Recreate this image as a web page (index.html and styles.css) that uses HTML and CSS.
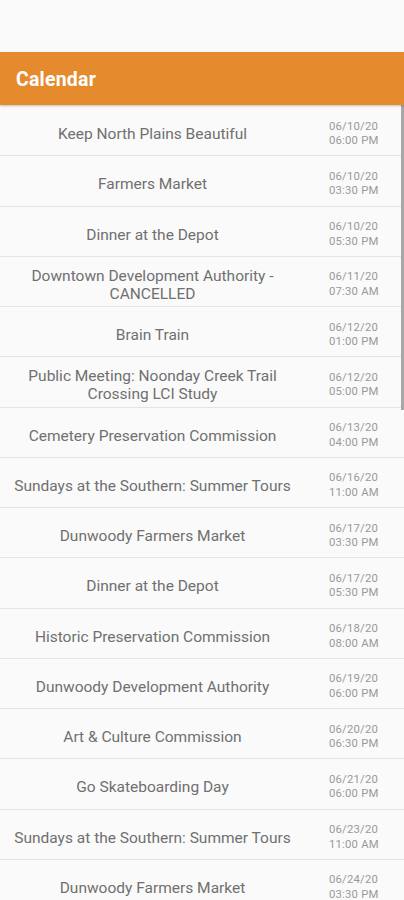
FILE: index.html
```html
<!DOCTYPE html>
<html>
<head>
<meta charset="utf-8">
<link rel="stylesheet" href="styles.css">
</head>
<body>
<div class="app">
  <div class="statusbar"></div>
  <header class="appbar"><h1 class="title">Calendar</h1></header>
  <div class="list">
    <div class="row"><div class="name">Keep North Plains Beautiful</div><div class="when">06/10/20<br>06:00 PM</div></div>
    <div class="row"><div class="name">Farmers Market</div><div class="when">06/10/20<br>03:30 PM</div></div>
    <div class="row"><div class="name">Dinner at the Depot</div><div class="when">06/10/20<br>05:30 PM</div></div>
    <div class="row"><div class="name">Downtown Development Authority - CANCELLED</div><div class="when">06/11/20<br>07:30 AM</div></div>
    <div class="row"><div class="name">Brain Train</div><div class="when">06/12/20<br>01:00 PM</div></div>
    <div class="row"><div class="name">Public Meeting: Noonday Creek Trail Crossing LCI Study</div><div class="when">06/12/20<br>05:00 PM</div></div>
    <div class="row"><div class="name">Cemetery Preservation Commission</div><div class="when">06/13/20<br>04:00 PM</div></div>
    <div class="row"><div class="name">Sundays at the Southern: Summer Tours</div><div class="when">06/16/20<br>11:00 AM</div></div>
    <div class="row"><div class="name">Dunwoody Farmers Market</div><div class="when">06/17/20<br>03:30 PM</div></div>
    <div class="row"><div class="name">Dinner at the Depot</div><div class="when">06/17/20<br>05:30 PM</div></div>
    <div class="row"><div class="name">Historic Preservation Commission</div><div class="when">06/18/20<br>08:00 AM</div></div>
    <div class="row"><div class="name">Dunwoody Development Authority</div><div class="when">06/19/20<br>06:00 PM</div></div>
    <div class="row"><div class="name">Art &amp; Culture Commission</div><div class="when">06/20/20<br>06:30 PM</div></div>
    <div class="row"><div class="name">Go Skateboarding Day</div><div class="when">06/21/20<br>06:00 PM</div></div>
    <div class="row"><div class="name">Sundays at the Southern: Summer Tours</div><div class="when">06/23/20<br>11:00 AM</div></div>
    <div class="row"><div class="name">Dunwoody Farmers Market</div><div class="when">06/24/20<br>03:30 PM</div></div>
    <div class="scrollthumb"></div>
  </div>
</div>
</body>
</html>
```
FILE: styles.css
```css
html, body {
  margin: 0;
  padding: 0;
  background: #fafafa;
}
body {
  font-family: Roboto, "Liberation Sans", sans-serif;
  width: 404px;
  height: 900px;
  overflow: hidden;
}
.app {
  display: flex;
  flex-direction: column;
}
.statusbar {
  height: 52px;
  background: #fafafa;
}
.appbar {
  height: 53px;
  background: #e68a2e;
  display: flex;
  align-items: center;
  padding-left: 16px;
  box-shadow: 0 1px 2px rgba(0,0,0,0.25);
  position: relative;
  z-index: 1;
}
.title {
  margin: 0;
  padding-top: 2px;
  color: #ffffff;
  font-size: 19.5px;
  font-weight: 700;
  letter-spacing: 0.2px;
}
.list {
  position: relative;
  display: flex;
  flex-direction: column;
  padding-top: 1px;
}
.row {
  box-sizing: border-box;
  height: 50.25px;
  display: flex;
  align-items: center;
  padding-top: 7px;
  border-bottom: 1.5px solid #e4e4e4;
  background: #fafafa;
}
.name {
  width: 305px;
  box-sizing: border-box;
  padding: 0 6px;
  text-align: center;
  font-size: 15.5px;
  line-height: 18px;
  color: #707070;
}
.when {
  margin-left: 24px;
  font-size: 11.3px;
  line-height: 14.5px;
  color: #999999;
  letter-spacing: 0.2px;
}
.scrollthumb {
  position: absolute;
  right: 0;
  top: 0;
  width: 3px;
  height: 305px;
  background: #a8a8a8;
}
```
